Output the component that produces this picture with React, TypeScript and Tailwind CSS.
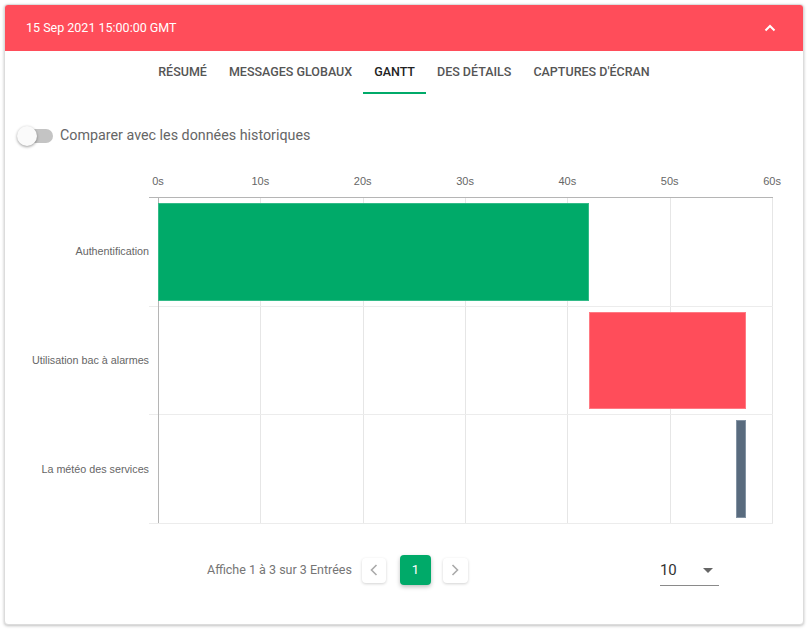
import React from 'react';

const ticks = [0, 10, 20, 30, 40, 50, 60];

const rows = [
  { label: 'Authentification', start: 0, end: 42.1, color: 'bg-[#00aa69] border-[#33bb88]' },
  { label: 'Utilisation bac à alarmes', start: 42.1, end: 57.5, color: 'bg-[#ff4d5a] border-[#ff7a83]' },
  { label: 'La météo des services', start: 56.5, end: 57.5, color: 'bg-[#596b7e] border-[#8393a3]' },
];

const tabs = ['RÉSUMÉ', 'MESSAGES GLOBAUX', 'GANTT', 'DES DÉTAILS', "CAPTURES D'ÉCRAN"];

function Gantt() {
  // plot area: x 153..767, y 26..352 inside this block
  const plotLeft = 153;
  const plotWidth = 614;
  const top = 26;
  const rowH = 326 / 3;
  const x = (s: number) => plotLeft + (s / 60) * plotWidth;

  return (
    <div className="relative h-[352px] mt-[25px] text-[#666] font-['Liberation_Sans',Arial,sans-serif]">
      {/* tick labels */}
      {ticks.map(t => (
        <div
          key={t}
          className="absolute top-[2px] text-[11px] -translate-x-1/2"
          style={{ left: x(t) }}
        >
          {t}s
        </div>
      ))}
      {/* vertical grid */}
      {ticks.slice(1).map(t => (
        <div key={t} className="absolute w-px bg-[#e6e6e6]" style={{ left: x(t), top, height: 326 }} />
      ))}
      {/* horizontal grid */}
      {[1, 2, 3].map(i => (
        <div key={i} className="absolute h-px bg-[#ececec]" style={{ left: 144, width: 768 - 144, top: top + rowH * i }} />
      ))}
      {/* axes */}
      <div className="absolute h-px bg-[#b5b5b5]" style={{ left: 144, width: 768 - 144, top }} />
      <div className="absolute w-px bg-[#b5b5b5]" style={{ left: plotLeft, top, height: 326 }} />
      {/* rows */}
      {rows.map((r, i) => (
        <React.Fragment key={r.label}>
          <div
            className="absolute right-[654px] text-[10.75px] text-[#666] -translate-y-1/2 whitespace-nowrap"
            style={{ top: top + rowH * i + rowH / 2 }}
          >
            {r.label}
          </div>
          <div
            className={`absolute border ${r.color}`}
            style={{ left: x(r.start), width: x(r.end) - x(r.start), top: top + rowH * i + 6, height: rowH - 11 }}
          />
        </React.Fragment>
      ))}
    </div>
  );
}

export default function App() {
  return (
    <div className="p-1 bg-white min-h-[630px]" style={{ fontFamily: 'Roboto, "Liberation Sans", sans-serif' }}>
      <div className="w-[800px] h-[621px] rounded border border-[#dcdcdc] shadow-[0_1px_3px_rgba(0,0,0,0.25)] overflow-hidden bg-white">
        {/* Header */}
        <div className="h-[46px] bg-[#ff4d5a] flex items-center pl-[21px] pr-[27px] text-white">
          <span className="text-[12.5px]">15 Sep 2021 15:00:00 GMT</span>
          <svg className="ml-auto" width="12" height="8" viewBox="0 0 12 8">
            <path d="M1.5 6.5 L6 2 L10.5 6.5" fill="none" stroke="white" strokeWidth="2" />
          </svg>
        </div>

        {/* Tabs */}
        <div className="flex justify-center h-[43px] text-[12.5px] font-medium">
          {tabs.map(t => (
            <div
              key={t}
              className={`px-[11px] pt-[2px] flex items-center border-b-2 ${
                t === 'GANTT' ? 'border-[#00aa69] text-[#222]' : 'border-transparent text-[#555]'
              }`}
            >
              {t}
            </div>
          ))}
        </div>

        {/* Toggle */}
        <div className="flex items-center h-5 mt-[32px] pl-[13px]">
          <div className="relative w-[35px] h-[14px]">
            <div className="absolute left-[1px] right-0 top-0 h-[14px] rounded-full bg-[#c4c4c4]" />
            <div className="absolute -left-[1px] -top-[3px] w-5 h-5 rounded-full bg-[#fafafa] shadow-[0_1px_3px_rgba(0,0,0,0.4)]" />
          </div>
          <span className="ml-[7px] text-[14.3px] text-[#666]">Comparer avec les données historiques</span>
        </div>

        <Gantt />

        {/* Pagination */}
        <div className="flex items-center h-[30px] mt-[32px]">
          <span className="ml-[202px] text-[12.5px] text-[#757575]">Affiche 1 à 3 sur 3 Entrées</span>
          <button className="ml-[10px] w-[24px] h-[25px] rounded bg-white shadow-[0_1px_3px_rgba(0,0,0,0.18)] flex items-center justify-center">
            <svg width="8" height="12" viewBox="0 0 8 12">
              <path d="M6.5 1 L1.5 6 L6.5 11" fill="none" stroke="#aaa" strokeWidth="1.6" />
            </svg>
          </button>
          <button className="ml-[14px] w-[31px] h-[30px] rounded bg-[#00aa69] text-white text-[13px] shadow-[0_2px_4px_rgba(0,0,0,0.25)]">
            1
          </button>
          <button className="ml-[12px] w-[25px] h-[25px] rounded bg-white shadow-[0_1px_3px_rgba(0,0,0,0.18)] flex items-center justify-center">
            <svg width="8" height="12" viewBox="0 0 8 12">
              <path d="M1.5 1 L6.5 6 L1.5 11" fill="none" stroke="#aaa" strokeWidth="1.6" />
            </svg>
          </button>
          <div className="ml-[192px] w-[59px] h-[30px] border-b border-[#8a8a8a] flex items-center mt-[2px]">
            <span className="text-[15px] text-[#333]">10</span>
            <svg className="ml-auto mr-[6px]" width="10" height="5" viewBox="0 0 10 5">
              <path d="M0 0 L10 0 L5 5 Z" fill="#666" />
            </svg>
          </div>
        </div>
      </div>
    </div>
  );
}
